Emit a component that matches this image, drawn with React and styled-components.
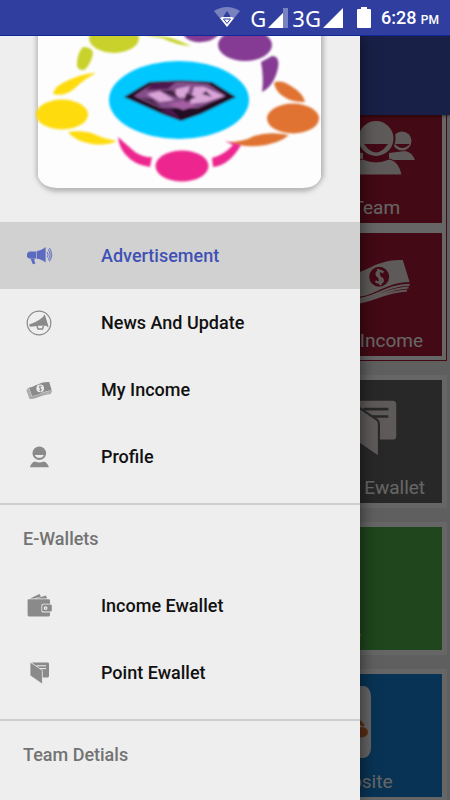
import { useLayoutEffect, useRef } from "react";
import styled, { createGlobalStyle } from "styled-components";

const menu = [
    {
        items: [
            { label: "Advertisement", icon: "megaphone", active: true },
            { label: "News And Update", icon: "news" },
            { label: "My Income", icon: "money" },
            { label: "Profile", icon: "profile" },
        ],
    },
    {
        title: "E-Wallets",
        items: [
            { label: "Income Ewallet", icon: "wallet" },
            { label: "Point Ewallet", icon: "booklet" },
        ],
    },
    { title: "Team Detials", items: [] },
];

const MegaphoneIcon = () => (
    <svg width="32" height="32" viewBox="0 0 32 32" fill="currentColor">
        <path d="M4 13.5 L6 11.6 H13 V18.5 H6 L4 17 Z" />
        <path d="M13.6 11.2 C17 10.6 20 9.2 22.6 7 V22.4 C20 20.4 17 19 13.6 18.8 Z" />
        <path d="M7.5 18.5 H12 L11.2 20 L12.4 23.4 L9.8 24.2 Z" />
        <path d="M24 12 Q26 14.8 24 17.5 M25.2 9.5 Q29 14.8 25.2 20 M26.4 8 Q31 14.8 26.4 21.5" fill="none" stroke="currentColor" strokeWidth="1.2" opacity="0.8" />
    </svg>
);

const NewsIcon = () => (
    <svg width="32" height="32" viewBox="0 0 32 32" fill="currentColor">
        <circle cx="16" cy="16" r="11.8" fill="none" stroke="currentColor" strokeWidth="1.2" />
        <path d="M6 17.5 L9.5 16.2 C14 14.6 19 11.6 21.8 8 L24.6 19 C20 18.4 14 18.6 10 19.4 L7 19.8 Z" />
        <path d="M14 19 L15 22 H19.5 L20.5 19" fill="none" stroke="currentColor" strokeWidth="1.4" />
        <path d="M21.2 8 L25 20" stroke="currentColor" strokeWidth="1.2" />
    </svg>
);

const MoneyIcon = ({ width = 32, height = 32, hole = "#eee" }) => (
    <svg width={width} height={height} viewBox="0 0 32 32" fill="currentColor">
        <path d="M6 13.4 C12 13.2 16 7.6 26.2 8 L28.8 16.4 C19.500 16.6 15 22 9 22 Z" />
        <path d="M5.2 13.8 L8.4 22.9 C15 23 19.500 17.6 28.8 17.4 M4.4 14.8 L7.6 23.7 C14.4 24 19.2 18.8 28.4 18.5 M3.8 16 L6.8 24.4 C13 24.9 18.6 20 27.8 19.6" fill="none" stroke="currentColor" strokeWidth="0.75" />
        <circle cx="17.2" cy="14.4" r="3.8" fill={hole} />
        <path d="M18.8 12.8 C17.6 11.6 15.8 12.4 16.4 13.8 C16.8 14.8 18.4 14.4 18.6 15.6 C18.6 16.8 16.8 17 15.8 16 M16.8 11.4 L17.8 17.6" fill="none" stroke="currentColor" strokeWidth="0.9" />
    </svg>
);

const ProfileIcon = () => (
    <svg width="32" height="32" viewBox="0 0 32 32" fill="currentColor">
        <circle cx="16.3" cy="12.3" r="6.8" />
        <path d="M11.8 14 H20.8 C19.5 17.8 13.1 17.8 11.8 14 Z" fill="#eee" />
        <path d="M6.8 26.3 C8 22.8 9.8 20.8 12 20.4 Q16.3 22.4 20.6 20.4 C22.8 20.8 24.8 22.8 26 26.3 Z" />
    </svg>
);

const WalletIcon = () => (
    <svg width="32" height="32" viewBox="0 0 32 32" fill="currentColor">
        <path d="M7 8.4 L16.5 4 L18 6.4 L11.5 8.4 Z M13 8.4 L23 5.4 L24 8.4 Z" />
        <path d="M5.6 9.2 H25.8 Q27 9.2 27 10.4 V25 Q27 26.4 25.6 26.4 H6 Q4.6 26.4 4.6 25 V10.2 Q4.6 9.2 5.6 9.2 Z" />
        <rect x="18.4" y="13.8" width="11" height="8.6" rx="1.6" fill="#eee" />
        <rect x="19.2" y="14.6" width="9.6" height="7" rx="1.4" />
        <circle cx="22.6" cy="18.1" r="1.9" fill="#eee" />
        <circle cx="22.6" cy="18.1" r="0.7" />
    </svg>
);

const BookletIcon = ({ width = 32, height = 32, line = "#eee" }) => (
    <svg width={width} height={height} viewBox="0 0 32 32" fill="currentColor">
        <path d="M9 5.6 H24.6 Q26 5.6 26 7 V19 Q26 20.4 24.6 20.4 H18 Z" />
        <path d="M13.5 8.8 H23 M16.5 11.6 H23" stroke={line} strokeWidth="1" />
        <path d="M7 5.4 Q7 5 7.6 5.4 L18.6 12.8 Q19.4 13.4 19.4 14.4 V26 Q19.4 27 18.4 26.4 L7.6 19 Q7 18.6 7 18 Z" stroke={line} strokeWidth="0.8" />
    </svg>
);

const TeamIcon = () => (
    <svg width="78" height="56" viewBox="0 0 78 56" fill="currentColor">
        <circle cx="13" cy="21" r="9.5" />
        <path d="M0 40 Q3 32 10 31 L26 33 V40 Z" />
        <circle cx="65" cy="21" r="9.5" />
        <path d="M78 40 Q75 32 68 31 L52 33 V40 Z" />
        <path d="M58 24 H73 Q65 32 58 24 Z" fill="#a81832" />
        <circle cx="39" cy="18.5" r="18.5" stroke="#a81832" strokeWidth="2" />
        <path d="M27 24 H51 Q39 41 27 24 Z" fill="#a81832" />
        <path d="M13 55 C15 45 20 40 26 39 Q39 45 52 39 C58 40 63 45 65 55 Z" stroke="#a81832" strokeWidth="1" />
    </svg>
);

const PeopleRing = () => (
    <>
        <g fill="#c9d22c">
            <ellipse cx="114" cy="38" rx="25" ry="15" />
            <path d="M83 47 Q93 47 93 54 Q90 66 84 70 Q76 71 77 62 Q78 52 83 47 Z" />
            <path d="M143 35 Q164 33 191 46 Q176 45 162 38 Z" />
        </g>
        <g fill="#853b93">
            <ellipse cx="245" cy="45" rx="27" ry="16" />
            <path d="M184 36 Q190 43 202 42 Q214 41 219 34 L212 26 H190 Z" />
            <path d="M272 56 Q280 56 278 68 Q274 86 262 92 Q264 78 261 62 Z" />
        </g>
        <g fill="#fedb0a">
            <ellipse cx="62" cy="114.5" rx="26" ry="15" />
            <path d="M96 73 Q83 80 74 89 Q64 97 53 94 Q54 86 69 80 Q84 73 96 73 Z" />
            <path d="M68 132 Q84 130 94 134 Q104 139 117 141 Q106 146 92 144 Q75 141 68 132 Z" />
        </g>
        <g fill="#e07330">
            <ellipse cx="293" cy="118.5" rx="26" ry="15" />
            <path d="M274 83 Q280 79 291 86 Q303 93 305 102 Q292 102 286 98 Q276 93 274 83 Z" />
            <path d="M226 142 Q244 142 254 136 Q269 131 289 135 Q279 144 258 146 Q241 147 226 142 Z" />
        </g>
        <g fill="#ed258f">
            <ellipse cx="182" cy="166" rx="26.5" ry="15.5" />
            <path d="M118 137 Q128 146 135 152 Q144 158 152 157 L150 167 Q134 165 125 154 Q119 147 118 137 Z" />
            <path d="M225 141 L241 145 Q236 154 229 160 Q222 166 213 167 L212 158 Q224 155 233 145 Z" />
        </g>
        <ellipse cx="179" cy="100" rx="70" ry="39" fill="#00c8ff" />
        <path d="M124 97 L149 82 Q181 79 212 82 L236 97 L201 114 L181 121 L162 114 Z" fill="#241024" />
        <path d="M134 96 L152 84 Q181 80 208 84 L226 96 L198 108 H160 Z" fill="#85508a" />
        <path d="M152 84 L176 82 L168 89 L146 90 Z M160 111 L170 108 L181 119 Z" fill="#4f1450" />
        <path d="M147 94 L160 91 L174 100 L160 102 Z M176 89 L190 86 L186 97 L176 98 Z M194 87 L204 87 L224 96 L206 102 L190 104 Z" fill="#d9a4d8" />
        <path d="M160 91 L172 90 L180 99 Z M186 93 L196 97 L184 103 Z M140 97 L152 99 L162 108 Z M206 91 L212 97 L202 94 Z" fill="#43243f" />
        <path d="M168 104 L184 101 L196 106 L183 110 Z" fill="#a45fa3" />
    </>
);

const Logo = () => (
    <svg width="100%" viewBox="0 36 360 186" role="img" aria-label="Logo">
        <defs>
            <filter id="soft" x="-10%" y="-10%" width="120%" height="120%">
                <feGaussianBlur stdDeviation="1" />
            </filter>
            <filter id="shade" x="-10%" y="-10%" width="120%" height="120%">
                <feGaussianBlur stdDeviation="2" />
            </filter>
        </defs>
        <path d="M36 0 H324 V176 Q316 192 303 192 H57 Q43 192 36 176 Z" fill="#b4b4b4" opacity="0.9" filter="url(#shade)" />
        <path d="M38 0 H321 V177 Q317 188 302 188 H57 Q43 188 38 177 Z" fill="#fdfdfd" />
        <g filter="url(#soft)">
            <PeopleRing />
        </g>
    </svg>
);

const SiteLogo = () => (
    <svg width="74" height="72" viewBox="28 -16 303 210" preserveAspectRatio="none">
        <rect x="28" y="-16" width="303" height="210" rx="30" fill="#fdfdfd" />
        <PeopleRing />
    </svg>
);

const WifiIcon = () => (
    <svg width="26" height="22" viewBox="0 0 26 22">
        <path d="M0 4 Q13 -4 26 4 L13 20 Z" fill="#fff" opacity="0.35" />
        <path d="M6 11 Q13 7 20 11 L13 20 Z" fill="#fff" />
        <path d="M13 4 L17 10 H9 Z" fill="#303f9f" />
        <path d="M9.5 12 H16.5 L13 16.5 Z" fill="none" stroke="#303f9f" />
    </svg>
);

const SignalIcon = ({ weak }) => (
    <svg width="20" height="20" viewBox="0 0 20 20">
        <path d={weak ? "M0 20 L15 5 V0 H20 V20 Z" : "M0 20 L20 0 V20 Z"} fill="#fff" opacity={weak ? 0.35 : 1} />
        {weak && <path d="M0 20 L15 5 V20 Z" fill="#fff" />}
    </svg>
);

const BatteryIcon = () => (
    <svg width="14" height="21" viewBox="0 0 14 21" fill="#fff">
        <path d="M4 0 H10 V2 H13 Q14 2 14 3 V20 Q14 21 13 21 H1 Q0 21 0 20 V3 Q0 2 1 2 H4 Z" />
    </svg>
);

const icons = {
    megaphone: MegaphoneIcon,
    news: NewsIcon,
    money: MoneyIcon,
    profile: ProfileIcon,
    wallet: WalletIcon,
    booklet: BookletIcon,
};

const App = () => {
    const content = useRef(null);

    // the dashboard sits slightly scrolled under the app bar
    useLayoutEffect(() => {
        content.current.scrollTop = 20;
    }, []);

    return (
        <Screen>
            <GlobalStyle />
            <StatusBar>
                <WifiIcon />
                <Networks>
                    <Network>
                        <span>G</span>
                        <SignalIcon weak />
                    </Network>
                    <Network>
                        <span>3G</span>
                        <SignalIcon />
                    </Network>
                </Networks>
                <BatteryIcon />
                <Clock>
                    6:28 <small>PM</small>
                </Clock>
            </StatusBar>
            <Stage>
                <AppBar />
                <Dashboard ref={content}>
                    <Section $columns={3} $gap="10px 20px" $outline="#a81832">
                        <Tile $color="#a81832">
                            <TileIcon>
                                <TeamIcon />
                            </TileIcon>
                            <TileLabel>Team</TileLabel>
                        </Tile>
                        <Tile $color="#a81832">
                            <TileIcon>
                                <MoneyIcon width={84} height={84} hole="#a81832" />
                            </TileIcon>
                            <TileLabel>My Income</TileLabel>
                        </Tile>
                    </Section>
                    <Section $columns={3} $gap="2px">
                        <Tile $color="#646464">
                            <TileIcon>
                                <BookletIcon width={84} height={84} line="#646464" />
                            </TileIcon>
                            <TileLabel>Point Ewallet</TileLabel>
                        </Tile>
                    </Section>
                    <Section $columns={2} $gap="2px">
                        <Tile $color="#4fae4a">
                            <TileIcon />
                            <TileLabel>Profile</TileLabel>
                        </Tile>
                    </Section>
                    <Section $columns={2} $gap="2px">
                        <Tile $color="#1480d2">
                            <TileIcon>
                                <SiteLogo />
                            </TileIcon>
                            <TileLabel>Open Website</TileLabel>
                        </Tile>
                    </Section>
                </Dashboard>
                <Scrim />
                <Drawer>
                    <Logo />
                    {menu.map((group, i) => (
                        <Group key={i} $divided={i > 0}>
                            {group.title && <GroupTitle>{group.title}</GroupTitle>}
                            {group.items.map((item) => {
                                const Icon = icons[item.icon];
                                return (
                                    <MenuItem key={item.label} href="#" $active={item.active}>
                                        <MenuIcon $active={item.active}>
                                            <Icon />
                                        </MenuIcon>
                                        {item.label}
                                    </MenuItem>
                                );
                            })}
                        </Group>
                    ))}
                </Drawer>
            </Stage>
        </Screen>
    );
};

const GlobalStyle = createGlobalStyle`
    * {
        box-sizing: border-box;
    }
    body {
        margin: 0;
        font-family: Roboto, sans-serif;
    }
    svg {
        display: block;
        flex-shrink: 0;
    }
`;

const Screen = styled.div`
    display: flex;
    flex-direction: column;
    height: 100vh;
    overflow: hidden;
    background-color: #eee;
`;

const StatusBar = styled.header`
    display: flex;
    align-items: center;
    justify-content: flex-end;
    gap: 10px;
    height: 36px;
    padding: 0 11px;
    color: white;
    background-color: #303f9f;
    border-bottom: 1px solid #12289a;
`;

const Networks = styled.div`
    display: flex;
    gap: 4px;
    margin-right: 4px;
`;

const Network = styled.div`
    display: flex;
    align-items: center;
    gap: 2px;
    font-family: "Noto Sans", sans-serif;
    font-size: 22px;
    line-height: 24px;
`;

const Clock = styled.div`
    font-size: 18px;
    font-weight: 500;

    small {
        font-size: 12px;
    }
`;

const Stage = styled.div`
    position: relative;
    display: flex;
    flex-direction: column;
    flex: 1;
    min-height: 0;
    overflow: hidden;
`;

const AppBar = styled.div`
    height: 79px;
    flex-shrink: 0;
    background-color: #3f51b5;
    box-shadow: 0 1px 3px rgba(0, 0, 0, 0.5);
    z-index: 1;
`;

const Dashboard = styled.main`
    display: flex;
    flex-direction: column;
    gap: 14px;
    flex: 1;
    min-height: 0;
    padding: 0 3px 24px;
    overflow: auto;
    scrollbar-width: none;
`;

const Section = styled.section`
    display: grid;
    grid-template-columns: repeat(${(props) => props.$columns}, 1fr);
    gap: ${(props) => props.$gap};
    padding: 4px;
    background-color: white;
    border: 1px solid ${(props) => props.$outline || "white"};
`;

const Tile = styled.div`
    display: flex;
    flex-direction: column;
    grid-column: -2 / -1;
    height: 123px;
    padding-bottom: 3px;
    color: white;
    background-color: ${(props) => props.$color};
`;

const TileIcon = styled.div`
    display: flex;
    align-items: center;
    justify-content: center;
    flex: 1;
    min-height: 0;
    color: #ebe0e0;
`;

const TileLabel = styled.div`
    font-size: 19px;
    line-height: 24px;
    text-align: center;
    white-space: nowrap;
`;

const Scrim = styled.div`
    position: absolute;
    inset: 0;
    z-index: 2;
    background-color: rgba(0, 0, 0, 0.6);
`;

const Drawer = styled.nav`
    position: absolute;
    top: 0;
    bottom: 0;
    left: 0;
    z-index: 3;
    width: 80%;
    overflow: auto;
    scrollbar-width: none;
    background-color: #eee;
    box-shadow: 0 0 16px rgba(0, 0, 0, 0.6);
`;

const Group = styled.div`
    padding-bottom: 13px;
    border-top: ${(props) => (props.$divided ? "2px solid #cfcfcf" : "none")};
`;

const GroupTitle = styled.div`
    display: flex;
    align-items: center;
    height: 67px;
    padding: 0 23px;
    font-size: 18px;
    font-weight: 500;
    color: #737373;
`;

const MenuItem = styled.a`
    display: flex;
    align-items: center;
    gap: 46px;
    height: 67px;
    padding: 0 23px;
    font-size: 18px;
    font-weight: 500;
    text-decoration: none;
    color: ${(props) => (props.$active ? "#3f51b5" : "#111")};
    background-color: ${(props) => (props.$active ? "#d1d1d1" : "transparent")};
`;

const MenuIcon = styled.span`
    color: ${(props) => (props.$active ? "#5c6bc0" : "#8a8a8a")};
`;

export default App;
